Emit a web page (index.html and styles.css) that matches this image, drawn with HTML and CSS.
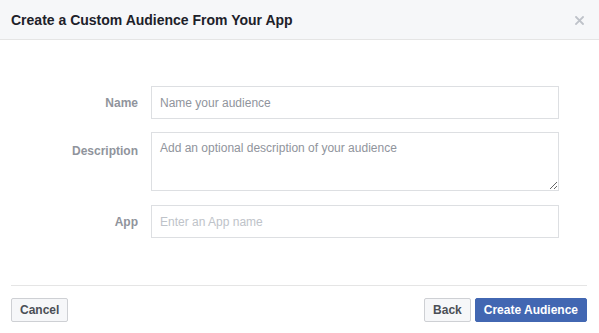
FILE: index.html
```html
<!DOCTYPE html>
<html lang="en">
<head>
    <meta charset="UTF-8">
    <meta name="viewport" content="width=device-width, initial-scale=1.0">
    <title>Create a Custom Audience</title>
    <link rel="stylesheet" href="styles.css">
</head>
<body>
<div class="dialog">
    <div class="dialog-header">
        <h1>Create a Custom Audience From Your App</h1>
        <span class="close-btn">
            <svg width="9" height="9" viewBox="0 0 9 9">
                <path d="M1 1 L8 8 M8 1 L1 8" stroke="#bec2c9" stroke-width="1.8" stroke-linecap="square"/>
            </svg>
        </span>
    </div>
    <div class="dialog-body">
        <div class="form-row">
            <label class="form-label">Name</label>
            <input class="form-input" type="text" placeholder="Name your audience">
        </div>
        <div class="form-row">
            <label class="form-label">Description</label>
            <textarea class="form-input form-textarea" placeholder="Add an optional description of your audience"></textarea>
        </div>
        <div class="form-row">
            <label class="form-label">App</label>
            <input class="form-input app-input" type="text" placeholder="Enter an App name">
        </div>
    </div>
    <div class="dialog-footer">
        <button class="btn">Cancel</button>
        <div class="footer-right">
            <button class="btn">Back</button>
            <button class="btn btn-primary">Create Audience</button>
        </div>
    </div>
</div>
</body>
</html>
```

FILE: styles.css
```css
/* Dialog */
body {
    font-family: "Liberation Sans", Arial, sans-serif;
    background-color: #fff;
    margin: 0;
}
.dialog {
    width: 599px;
    height: 333px;
    background-color: #fff;
}
.dialog-header {
    height: 39px;
    background-color: #f6f7f9;
    border-bottom: 1px solid #e5e5e5;
    display: flex;
    align-items: center;
    justify-content: space-between;
    padding: 0 12px 0 11px;
}
.dialog-header h1 {
    margin: 0;
    font-size: 14px;
    font-weight: bold;
    color: #1d2129;
}
.close-btn {
    display: flex;
    margin-right: 3px;
    margin-top: 1px;
}
.dialog-body {
    padding: 46px 40px 0 0;
    height: 200px;
    box-sizing: border-box;
}
.form-row {
    display: flex;
    align-items: center;
    margin-bottom: 13px;
}
.form-row:nth-child(2) {
    align-items: flex-start;
    margin-bottom: 14px;
}
.form-row:nth-child(2) .form-label {
    padding-top: 12px;
}
.form-label {
    width: 151px;
    flex-shrink: 0;
    padding-right: 13px;
    box-sizing: border-box;
    text-align: right;
    font-size: 12px;
    font-weight: bold;
    color: #90949c;
}
.form-input {
    width: 408px;
    height: 33px;
    box-sizing: border-box;
    border: 1px solid #dddfe2;
    border-radius: 0;
    padding: 0 8px;
    font-family: "Liberation Sans", Arial, sans-serif;
    font-size: 12px;
    color: #1d2129;
    outline: none;
    margin: 0;
}
.form-input::placeholder {
    color: #90949c;
}
.app-input::placeholder {
    color: #bec3c9;
}
.form-textarea {
    height: 59px;
    padding: 8px;
    resize: vertical;
    display: block;
}
.dialog-footer {
    margin: 45px 12px 0 11px;
    border-top: 1px solid #e5e5e5;
    padding-top: 12px;
    display: flex;
    justify-content: space-between;
}
.footer-right {
    display: flex;
    gap: 4px;
}
.btn {
    height: 24px;
    padding: 0 8px;
    font-family: "Liberation Sans", Arial, sans-serif;
    font-size: 12px;
    font-weight: bold;
    color: #4b4f56;
    background-color: #f6f7f9;
    border: 1px solid #ced0d4;
    border-radius: 2px;
    cursor: pointer;
}
.btn-primary {
    background-color: #4267b2;
    border-color: #4267b2;
    color: #fff;
}
```
